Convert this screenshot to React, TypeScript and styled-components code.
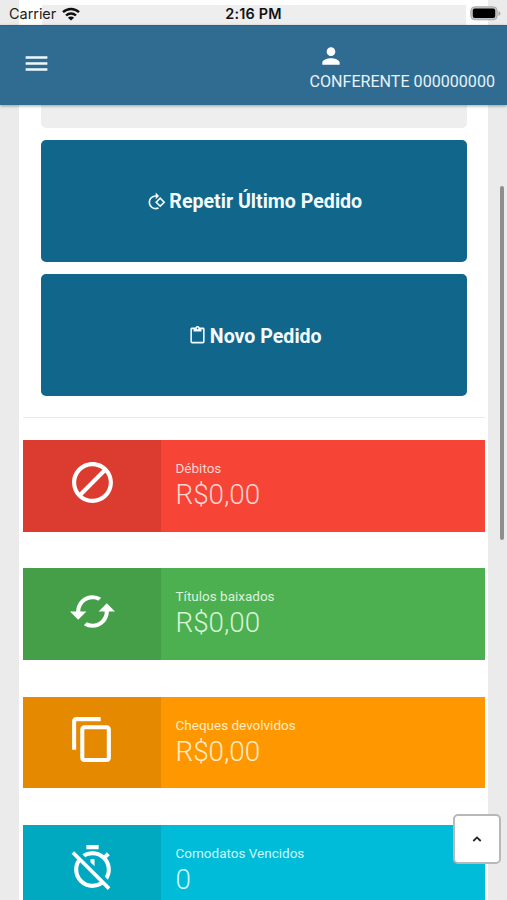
import React from 'react';
import styled, { createGlobalStyle } from 'styled-components';
import {
  MdBlock,
  MdCached,
  MdContentCopy,
  MdContentPaste,
  MdMenu,
  MdPerson,
} from 'react-icons/md';

const GlobalStyle = createGlobalStyle`
  * { box-sizing: border-box; }
  body { margin: 0; background: #ebebeb; font-family: Roboto, sans-serif; overflow: hidden; }
  svg { display: block; flex: none; }
`;

const Screen = styled.div`
  position: relative;
  width: 507px;
  height: 900px;
  overflow: hidden;
  display: flex;
  flex-direction: column;
  background: linear-gradient(90deg, #ebebeb 19.5px, #fff 19.5px, #fff 488px, #ebebeb 488px);
`;

const StatusBar = styled.div`
  height: 25px;
  flex: none;
  display: grid;
  grid-template-columns: 1fr auto 1fr;
  align-items: center;
  padding: 2px 6px 0 9px;
  font: 400 14.5px/22px Inter, sans-serif;
  color: #1c1c1c;
  background: linear-gradient(#eee, #eee) 42px 5px / 424px 20px no-repeat;
`;

const Carrier = styled.div`
  display: flex;
  align-items: center;
  gap: 6px;
  letter-spacing: -0.05px;
`;

const Clock = styled.div`
  margin-left: -3px;
  font-weight: 600;
  font-size: 14.4px;
  letter-spacing: 0.2px;
  color: #111;
`;

const Battery = styled.svg`
  justify-self: end;
`;

const Header = styled.header`
  position: relative;
  z-index: 1;
  height: 80px;
  flex: none;
  display: flex;
  justify-content: space-between;
  align-items: center;
  padding: 0 12px 0 22px;
  background: #306c92;
  border-top: 1px solid #286389;
  box-shadow: 0 1px 3px rgba(0, 0, 0, 0.35);
  color: #fff;
`;

const MenuButton = styled.button`
  display: flex;
  padding: 0;
  margin-top: -5px;
  border: 0;
  background: none;
  color: #eef8fc;
`;

const User = styled.div`
  display: flex;
  flex-direction: column;
  align-items: flex-start;
  padding-top: 5px;
  font-size: 16.1px;
  line-height: 24px;
  color: #e6f2f8;
`;

const UserIcon = styled.div`
  margin-left: 9px;
  height: 27px;
  color: #fff;
`;

const Content = styled.main`
  flex: 1;
  min-height: 0;
  padding: 0 22px 0 23px;
`;

const Actions = styled.div`
  display: flex;
  flex-direction: column;
  gap: 12px;
  padding: 0 18.5px 0 18px;
`;

const PanelEnd = styled.div`
  height: 22.7px;
  border-radius: 0 0 5px 5px;
  background: #eee;
`;

const ActionButton = styled.button`
  height: 122.3px;
  display: flex;
  align-items: center;
  justify-content: center;
  gap: 3px;
  padding: 3px 0 0 2px;
  border: 0;
  border-radius: 5px;
  background: #10668b;
  color: #f4fbff;
  font: 700 19.6px/26px Roboto, sans-serif;

  svg {
    margin-top: -2px;
  }
`;

const Divider = styled.hr`
  height: 1px;
  margin: 20.3px 0 22.5px;
  border: 0;
  background: #e9e9e9;
`;

const Cards = styled.div`
  display: flex;
  flex-direction: column;
  gap: 36.6px;
`;

const Card = styled.section<{ $color: string }>`
  display: flex;
  height: 91.7px;
  flex: none;
  background: ${(p) => p.$color};
`;

const CardIcon = styled.div<{ $color: string }>`
  width: 138px;
  display: flex;
  align-items: center;
  justify-content: center;
  padding-bottom: 6px;
  background: ${(p) => p.$color};
  color: #fff;
`;

const CardText = styled.div<{ $tint: string }>`
  padding: 19px 0 0 14.5px;
  color: ${(p) => p.$tint};
`;

const CardLabel = styled.div`
  font-size: 13.5px;
  line-height: 19px;
`;

const CardValue = styled.div`
  font-size: 27.8px;
  font-weight: 300;
  line-height: 33px;
`;

const ScrollThumb = styled.div`
  position: absolute;
  top: 186px;
  right: 3px;
  width: 4.5px;
  height: 354px;
  border-radius: 3px;
  background: #8e8e8e;
`;

const TopButton = styled.button`
  position: absolute;
  left: 453px;
  top: 814px;
  width: 48px;
  height: 49.5px;
  display: flex;
  align-items: center;
  justify-content: center;
  padding: 0;
  border: 2px solid #b8b8b8;
  border-radius: 5px;
  background: #fff;
`;

function TimerOffIcon({ size }: { size: number }) {
  return (
    <svg width={size} height={size} viewBox="0 0 24 24" fill="currentColor">
      <path d="M19.04 4.55l-1.42 1.42C16.07 4.74 14.12 4 12 4c-1.83 0-3.53.55-4.95 1.48l1.46 1.46C9.53 6.35 10.73 6 12 6c3.87 0 7 3.13 7 7 0 1.27-.35 2.47-.94 3.49l1.45 1.45C20.45 16.53 21 14.83 21 13c0-2.12-.74-4.07-1.97-5.61l1.42-1.42-1.41-1.42zM15 1H9v2h6V1zm-4 8.44l2 2V8h-2v1.44zM3.02 4L1.75 5.27 4.5 8.03C3.55 9.45 3 11.16 3 13c0 4.97 4.02 9 9 9 1.84 0 3.55-.55 4.98-1.5l2.5 2.5 1.27-1.27-7.71-7.71L3.02 4zM12 20c-3.87 0-7-3.13-7-7 0-1.28.35-2.48.95-3.52l9.56 9.56c-1.03.61-2.23.96-3.51.96z" />
    </svg>
  );
}

const cards = [
  { label: 'Débitos', value: 'R$0,00', color: '#f64436', dark: '#dc3c30', tint: '#ffd5d0', Icon: MdBlock },
  { label: 'Títulos baixados', value: 'R$0,00', color: '#4db050', dark: '#459e48', tint: '#d8f3d8', Icon: MdCached },
  { label: 'Cheques devolvidos', value: 'R$0,00', color: '#ff9800', dark: '#e58900', tint: '#ffebc4', Icon: MdContentCopy },
  { label: 'Comodatos Vencidos', value: '0', color: '#00bcd9', dark: '#00a9c0', tint: '#caf7fc', Icon: TimerOffIcon },
];

export default function App() {
  return (
    <Screen>
      <GlobalStyle />
      <StatusBar>
        <Carrier>
          Carrier
          <svg width="18" height="14" viewBox="0 0 18 14" fill="none" stroke="#111" strokeWidth="2.4">
            <path d="M1 5.2a11.5 11.5 0 0 1 16 0" />
            <path d="M4 8.5a7.2 7.2 0 0 1 10 0" />
            <path d="M9 13.6 5.9 10.7a4.4 4.4 0 0 1 6.2 0z" fill="#111" stroke="none" />
          </svg>
        </Carrier>
        <Clock>2:16 PM</Clock>
        <Battery width="31" height="15" viewBox="0 0 31 15">
          <rect x="0.8" y="0.8" width="26.4" height="13" rx="4" fill="#c4c4c4" stroke="#aaa" />
          <rect x="2.8" y="2.5" width="22.4" height="9.6" rx="2" fill="#000" />
          <path d="M28.5 5v5q2-.8 2-2.5T28.5 5z" fill="#aaa" />
        </Battery>
      </StatusBar>
      <Header>
        <MenuButton aria-label="Menu"><MdMenu size={29} /></MenuButton>
        <User>
          <UserIcon><MdPerson size={26} /></UserIcon>
          CONFERENTE 000000000
        </User>
      </Header>
      <Content>
        <Actions>
          <PanelEnd />
          <ActionButton>
            <svg width="19" height="19" viewBox="0 0 24 24" fill="currentColor">
              <path
                transform="translate(24 0) scale(-1 1)"
                d="M7.34 6.41L.86 12.9l6.49 6.48 6.49-6.48-6.5-6.49zM3.69 12.9l3.66-3.66L11 12.9l-3.66 3.66-3.65-3.66zm15.67-6.26C17.61 4.88 15.3 4 13 4V.76L8.76 5 13 9.24V6c1.79 0 3.58.68 4.95 2.05 2.73 2.73 2.73 7.17 0 9.9C16.58 19.32 14.79 20 13 20c-.97 0-1.94-.21-2.84-.61l-1.49 1.49C10.02 21.62 11.51 22 13 22c2.3 0 4.61-.88 6.36-2.64 3.52-3.51 3.52-9.21 0-12.72z"
              />
            </svg>
            Repetir Último Pedido
          </ActionButton>
          <ActionButton>
            <MdContentPaste size={19} />
            Novo Pedido
          </ActionButton>
        </Actions>
        <Divider />
        <Cards>
          {cards.map(({ label, value, color, dark, tint, Icon }) => (
            <Card key={label} $color={color}>
              <CardIcon $color={dark}><Icon size={49} /></CardIcon>
              <CardText $tint={tint}>
                <CardLabel>{label}</CardLabel>
                <CardValue>{value}</CardValue>
              </CardText>
            </Card>
          ))}
        </Cards>
      </Content>
      <ScrollThumb />
      <TopButton aria-label="Voltar ao topo">
        <svg width="10" height="6" viewBox="0 0 10 6" fill="none" stroke="#222" strokeWidth="1.8">
          <path d="M1.3 5 5 1.4 8.7 5" />
        </svg>
      </TopButton>
    </Screen>
  );
}
